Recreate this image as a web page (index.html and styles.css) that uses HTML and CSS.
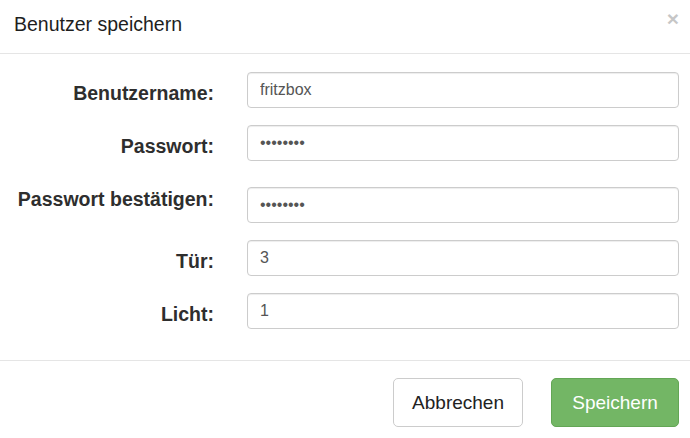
FILE: index.html
```html
<!DOCTYPE html>
<html lang="de">
<head>
<meta charset="utf-8">
<title>Benutzer speichern</title>
<link rel="stylesheet" href="styles.css">
</head>
<body>
<div class="modal">
  <div class="modal-header">
    <h4 class="modal-title">Benutzer speichern</h4>
    <button class="close" type="button" aria-label="Schließen">×</button>
  </div>
  <form class="modal-body">
    <div class="form-row">
      <label class="form-label" for="u">Benutzername:</label>
      <input class="form-input" id="u" type="text" value="fritzbox">
    </div>
    <div class="form-row">
      <label class="form-label" for="p1">Passwort:</label>
      <input class="form-input" id="p1" type="password" value="fritzbox">
    </div>
    <div class="form-row form-row-shift">
      <label class="form-label" for="p2">Passwort bestätigen:</label>
      <input class="form-input" id="p2" type="password" value="fritzbox">
    </div>
    <div class="form-row">
      <label class="form-label" for="t">Tür:</label>
      <input class="form-input" id="t" type="text" value="3">
    </div>
    <div class="form-row">
      <label class="form-label" for="l">Licht:</label>
      <input class="form-input" id="l" type="text" value="1">
    </div>
  </form>
  <div class="modal-footer">
    <button class="btn btn-default" type="button">Abbrechen</button>
    <button class="btn btn-success" type="button">Speichern</button>
  </div>
</div>
</body>
</html>
```

FILE: styles.css
```css
* {
  box-sizing: border-box;
}

html, body {
  margin: 0;
  padding: 0;
  background: #ffffff;
}

body {
  font-family: "Liberation Sans", Arial, Helvetica, sans-serif;
  color: #333333;
}

.modal {
  width: 690px;
  height: 438px;
  background: #ffffff;
  display: flex;
  flex-direction: column;
}

.modal-header {
  height: 54px;
  border-bottom: 1px solid #e5e5e5;
  padding: 0 11px 0 14px;
  display: flex;
  justify-content: space-between;
  align-items: flex-start;
}

.modal-title {
  margin: 0;
  padding-top: 13px;
  font-size: 19.5px;
  line-height: 22px;
  font-weight: normal;
  color: #1e1e1e;
}

.close {
  margin: 0;
  padding: 9px 0 0 0;
  border: 0;
  background: transparent;
  font-family: "Liberation Sans", Arial, sans-serif;
  font-size: 21px;
  line-height: 20px;
  font-weight: bold;
  color: #000000;
  opacity: 0.22;
  cursor: pointer;
}

.modal-body {
  margin: 0;
  padding: 18px 11px 31px 0;
  display: flex;
  flex-direction: column;
  gap: 17px;
}

.form-row {
  display: grid;
  grid-template-columns: 214px 1fr;
  column-gap: 33px;
  align-items: start;
}

.form-label {
  text-align: right;
  font-weight: bold;
  font-size: 19.5px;
  line-height: 22px;
  padding-top: 10px;
  color: #2e2e2e;
  white-space: nowrap;
}

.form-input {
  height: 36px;
  width: 100%;
  margin: 0;
  padding: 0 12px;
  border: 1px solid #cccccc;
  border-radius: 4px;
  box-shadow: inset 0 1px 1px rgba(0, 0, 0, 0.075);
  font-family: "Liberation Sans", Arial, sans-serif;
  font-size: 16px;
  color: #555555;
  background: #ffffff;
  outline: none;
}

.form-row-shift .form-input {
  margin-top: 9px;
}

.modal-footer {
  flex: 1;
  border-top: 1px solid #e5e5e5;
  padding: 17px 11px 11px 0;
  display: flex;
  justify-content: flex-end;
  align-items: flex-start;
  gap: 28px;
}

.btn {
  height: 49px;
  min-width: 128px;
  padding: 0 18px;
  border-radius: 5px;
  font-family: "Liberation Sans", Arial, sans-serif;
  font-size: 19px;
  line-height: 47px;
  cursor: pointer;
}

.btn-default {
  background: #ffffff;
  border: 1px solid #cccccc;
  color: #222222;
}

.btn-success {
  background: #73b665;
  border: 1px solid #63a655;
  color: #ffffff;
}
```
